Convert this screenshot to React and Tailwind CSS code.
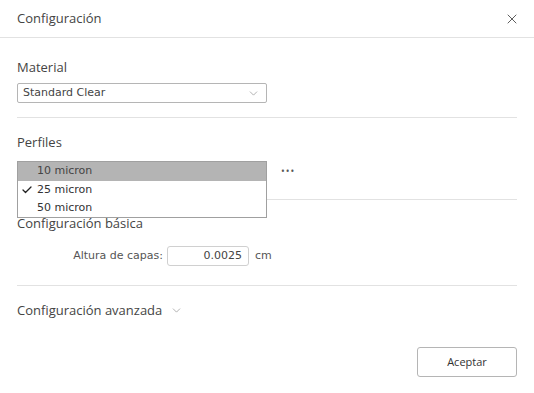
import { X, ChevronDown, Check } from 'lucide-react'

const labelFont = "font-['Open_Sans',_'Noto_Sans',_sans-serif]"
const fieldFont = "font-['DejaVu_Sans',_'Liberation_Sans',_sans-serif]"

export default function App() {
  return (
    <div className={`relative w-[534px] h-[393px] bg-white text-[#333] ${labelFont}`}>
      {/* header */}
      <div className="flex items-center justify-between h-[38px] pl-[17px] pr-[14px] border-b border-[#e2e2e2]">
        <span className="text-[13px] text-[#444]">Configuración</span>
        <X size={16} strokeWidth={1.3} className="text-[#444]" />
      </div>

      <div className="px-[17px]">
        {/* material */}
        <div className="pt-[20px] pb-[14px] border-b border-[#e2e2e2]">
          <div className="text-[13px] leading-[18px] text-[#444]">Material</div>
          <div className="mt-[7px] w-[250px] h-[20px] flex items-center justify-between pl-[5px] pr-[6px] border border-[#b5b5b5] rounded-[2px]">
            <span className={`${fieldFont} text-[11px] text-[#444]`}>Standard Clear</span>
            <ChevronDown size={13} strokeWidth={1.2} className="text-[#888]" />
          </div>
        </div>

        {/* perfiles */}
        <div className="pt-[15px] pb-[19px] border-b border-[#e2e2e2]">
          <div className="text-[13px] leading-[18px] text-[#444]">Perfiles</div>
          <div className="mt-[10px] flex items-center gap-[15px]">
            <div className="w-[249px] h-[19px] border border-[#b5b5b5]" />
            <span className="text-[#555] text-[10px] tracking-[1px] leading-none">•••</span>
          </div>
        </div>

        {/* basica */}
        <div className="pt-[14px] pb-[19px] border-b border-[#e2e2e2]">
          <div className="text-[13px] leading-[18px] text-[#444]">Configuración básica</div>
          <div className="mt-[14px] flex items-center">
            <span className={`${fieldFont} w-[146px] text-right text-[11px] text-[#555]`}>Altura de capas:</span>
            <div className={`${fieldFont} ml-[4px] w-[82px] h-[20px] flex items-center justify-end pr-[6px] border border-[#d0d0d0] rounded-[3px] text-[11px] text-[#444]`}>
              0.0025
            </div>
            <span className={`${fieldFont} ml-[6px] text-[11px] text-[#555]`}>cm</span>
          </div>
        </div>

        {/* avanzada */}
        <div className="pt-[14px] flex items-center gap-[8px]">
          <span className="text-[13px] leading-[20px] text-[#444]">Configuración avanzada</span>
          <ChevronDown size={13} strokeWidth={1.2} className="text-[#888]" />
        </div>

        <div className="mt-[27px] flex justify-end">
          <button className="w-[100px] h-[30px] border border-[#b5b5b5] rounded-[3px] text-[11px] text-[#333] bg-white">
            Aceptar
          </button>
        </div>
      </div>

      {/* open dropdown */}
      <div className={`absolute left-[17px] top-[161px] w-[250px] border border-[#a0a0a0] bg-white ${fieldFont} text-[11px]`}>
        <div className="h-[19px] flex items-center pl-[19px] bg-[#b4b4b4] text-[#444]">10 micron</div>
        <div className="h-[18px] flex items-center pl-[3px] text-[#333]">
          <Check size={12} strokeWidth={2.6} className="mr-[4px] text-[#222]" />
          25 micron
        </div>
        <div className="h-[18px] flex items-center pl-[19px] text-[#333]">50 micron</div>
      </div>
    </div>
  )
}
